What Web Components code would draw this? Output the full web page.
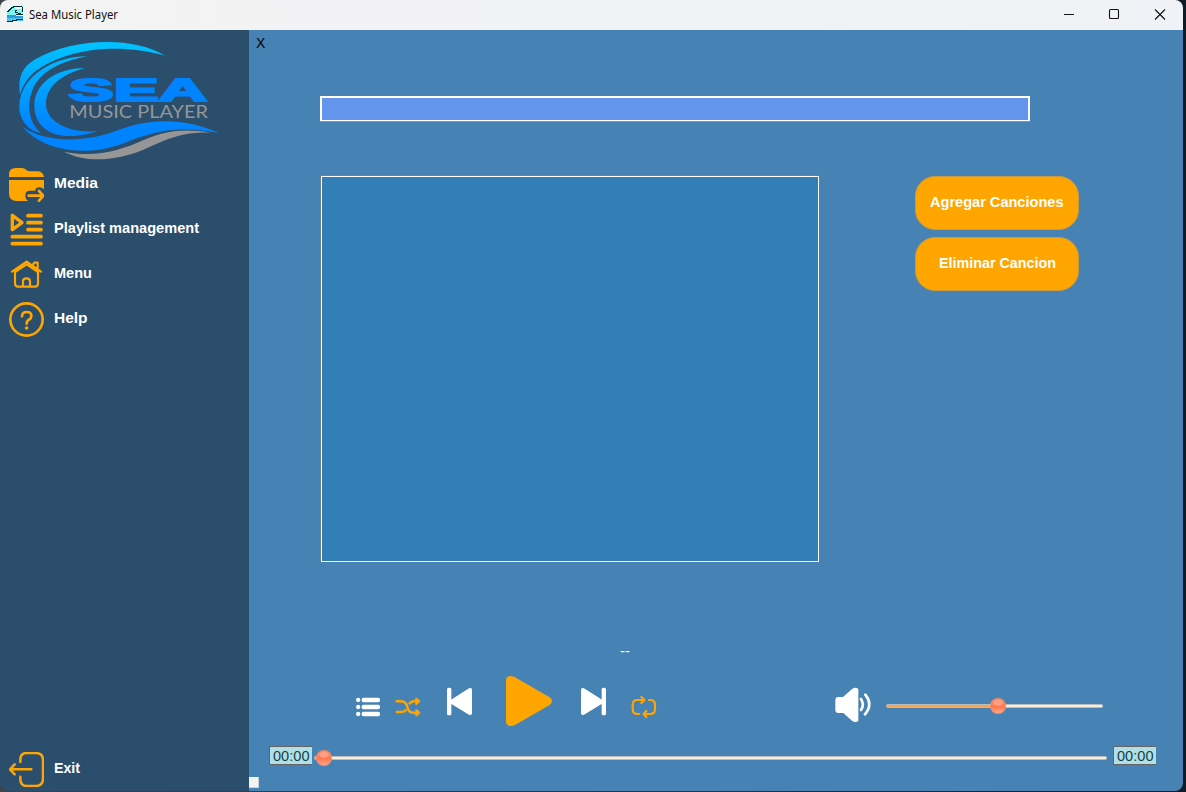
<!DOCTYPE html>
<html lang="es"><head><meta charset="utf-8"><title>Sea Music Player</title>
<style>html,body{margin:0;width:1186px;height:792px;overflow:hidden;background:linear-gradient(90deg,#3f4247,#2c333a 60%,#101a24);font-family:"Liberation Sans",Arial,sans-serif}</style>
</head><body>
<sea-window></sea-window>
<script>
const define=(name,html,init)=>customElements.define(name,class extends HTMLElement{
  constructor(){super();this.attachShadow({mode:'open'})}
  connectedCallback(){
    if(this.shadowRoot.firstChild)return;
    const t=document.createElement('template');
    t.innerHTML=typeof html==='function'?html(this):html;
    this.shadowRoot.append(t.content.cloneNode(true));
    if(init)init(this);
  }
});

// Single line of text stretched to a given width.
define('fit-label',`<style>:host{display:block;white-space:pre;flex:none;text-align:left}span{display:inline-block;transform-origin:0 50%}</style><span><slot></slot></span>`,el=>{
  const s=el.shadowRoot.querySelector('span'),w=+el.getAttribute('w');
  const n=s.getBoundingClientRect().width;
  el.style.width=w+'px';
  if(n)s.style.transform=`scaleX(${w/n})`;
});

const stroke=(d,w,c='#ffa500')=>`<path d="${d}" fill="none" stroke="${c}" stroke-width="${w}" stroke-linecap="round" stroke-linejoin="round"/>`;
const icons={
  media:['27 21 105 105',`<path fill="#ffa500" d="M27 51V43Q27 24 48 24H66Q73 24 79 30Q84 34 91 34H112Q129 34 132 51ZM27 60H132V88Q126 82 118 82Q108 82 105 92H89Q76 92 76 106Q76 118 84 123H50Q27 123 27 100Z"/>`+stroke('M86 107H128M117 93L130 107L117 122',8)],
  playlist:['27 156 105 105',stroke('M37 166V209L66 188Z',10)+stroke('M84 167H123M84 188H123M84 209H123M37 230H123M37 251H123',11)],
  home:['27 291 105 105',stroke('M36 335L80 305L123 335M98 315L103 308H113V326M45 336V370Q45 380 54 380H105Q114 380 114 370V336L80 313L45 336M69 380V364Q69 355 79 355Q90 355 90 364V380',6.5)],
  help:['27 426 105 105',`<circle cx="79.5" cy="478.5" r="48.5" fill="none" stroke="#ffa500" stroke-width="8"/>`+stroke('M66 469Q66 456 80 456Q94 456 94 467Q94 475 87 479Q80 483 80 491',8)+`<circle cx="80" cy="504" r="5.5" fill="#ffa500"/>`],
  exit:['27 36 105 105',stroke('M61 66V60Q61 39 80 39H106Q129 39 129 60V116Q129 138 106 138H80Q61 138 61 116V110M94 88H30M44 73L30 88L44 103',7.5)],
  list:['48 105 75 156',[180,201,222].map(y=>`<circle cx="54.5" cy="${y}" r="6.5" fill="#fff"/><rect x="65" y="${y-6.5}" width="55" height="13" rx="5" fill="#fff"/>`).join('')],
  shuffle:['165 105 78 156',stroke('M170 184H180Q197 184 201 197L204 207Q208 218 220 218H235M170 216H184Q193 216 197 211M209 190Q214 184 222 184H235M229 177L237 184L229 191M229 211L237 218L229 225',7.5)],
  prev:['318 105 81 156',`<rect x="321" y="143" width="13" height="83" rx="5" fill="#fff"/><path fill="#fff" d="M333 179L387 145Q396 141 396 150V219Q396 228 387 224L333 191Z"/>`],
  play:['495 105 144 156',`<path fill="#ffa500" d="M498 122Q498 108 512 108Q518 108 525 112L629 172Q643 183 629 195L525 255Q519 258 512 258Q498 258 498 244Z"/>`],
  next:['720 105 81 156',`<rect x="785" y="143" width="13" height="83" rx="5" fill="#fff"/><path fill="#fff" d="M786 179L732 145Q723 141 723 150V219Q723 228 732 224L786 191Z"/>`],
  repeat:['873 105 78 156',stroke('M898 222H892Q878 222 878 208V194Q878 180 892 180H912M904 171L913 180L904 189M927 180H931Q945 180 945 194V208Q945 222 931 222H912M919 213L911 222L919 231',6.5)],
  volume:['42 15 114 156',`<path fill="#fff" d="M46 90Q46 81 55 81H69L97 56Q107 50 115 57V153Q107 159 97 153L70 129H55Q46 129 46 120Z"/>`+stroke('M123 87Q134 104 123 120M136 74Q160 103 135 133',8,'#fff')]
};
define('sea-icon',el=>{const[v,b]=icons[el.getAttribute('name')],[,,w,h]=v.split(' ');
  return `<style>:host{display:block;flex:none}svg{display:block}</style><svg width="${w/3}" height="${h/3}" viewBox="${v}">${b}</svg>`});

define('sea-logo',`<style>:host{display:block;height:135px}svg{display:block}</style>
<svg width="249" height="135" viewBox="0 90 747 405">
<defs><linearGradient id="g" gradientUnits="userSpaceOnUse" x1="0" y1="130" x2="0" y2="450"><stop offset="0" stop-color="#00c3ff"/><stop offset=".8" stop-color="#0083ff"/><stop offset="1" stop-color="#0083ff"/></linearGradient></defs>
<g fill="url(#g)">
<path d="M60 285C52 232 67 201 106 178C220 112 404 109 495 167C397 140 286 138 190 171C111 199 74 234 60 285Z"/>
<path d="M262 169C170 169 61 222 58 319C57 354 79 391 123 400C87 367 79 321 96 274C116 221 166 188 262 169Z"/>
<path d="M255 204C165 204 103 254 103 315C103 380 151 408 208 408C242 408 273 401 292 393C218 400 157 374 142 333C127 286 156 230 255 204Z"/>
<path d="M68 382C147 433 263 424 345 394C447 354 547 352 658 399C539 378 471 391 383 425C285 466 146 467 68 382Z"/></g>
<path fill="#969696" d="M192 455C280 475 364 451 431 420C504 388 559 386 636 398C560 394 511 412 448 441C355 485 258 490 192 455Z"/>
<text x="206" y="304" textLength="416" lengthAdjust="spacingAndGlyphs" font-family="Liberation Sans,sans-serif" font-weight="700" font-size="96" fill="#0083ff" stroke="#0083ff" stroke-width="6">SEA</text>
<text x="208" y="354" textLength="416" lengthAdjust="spacingAndGlyphs" font-family="Lato,sans-serif" font-weight="400" font-size="53" fill="#969696">MUSIC PLAYER</text>
</svg>`);

define('nav-item',el=>`<style>:host{display:flex;height:35px;gap:10px;padding-left:9px;color:#fff;font:bold 14px/33px "Liberation Sans",Arial,sans-serif}</style>
<sea-icon name="${el.getAttribute('icon')}"></sea-icon><fit-label w="${el.getAttribute('w')}">${el.getAttribute('text')}</fit-label>`);

define('sea-sidebar',`<style>:host{display:flex;flex-direction:column;box-sizing:border-box;background:#2a4e6c;padding-bottom:4px}nav{display:flex;flex-direction:column;gap:10px;padding-top:2px}.exit{margin-top:auto}</style>
<sea-logo></sea-logo><nav><nav-item icon="media" text="Media" w="44"></nav-item><nav-item icon="playlist" text="Playlist management" w="145"></nav-item><nav-item icon="home" text="Menu" w="38"></nav-item><nav-item icon="help" text="Help" w="33.5"></nav-item></nav>
<nav-item class="exit" icon="exit" text="Exit" w="26"></nav-item>`);

define('title-bar',`<style>:host{display:flex;height:30px;background:linear-gradient(90deg,#f3f3f3,#f0f2f7);align-items:center;box-sizing:border-box;padding-left:7px;color:#111;font:12px/28px "Noto Sans",sans-serif}.app{margin:-2px 6px 0 0}.b{margin-left:auto;display:block}svg{display:block}</style>
<svg class="app" width="16" height="16" viewBox="0 0 16 16" shape-rendering="crispEdges"><path fill="#7cf4f4" d="M5 0H16V7H14V9H0V5Z"/><path fill="#e4ffff" d="M8 1H15V3H8Z"/><path fill="#3499db" d="M0 9H9V10H16V13H0Z"/><path fill="#42ccf5" d="M0 12H16V15H0Z"/><path fill="none" stroke="#06272d" d="M0 5.5H1.5V4.5H2.5V3.5H3.5V2.5H4.5V1.5H6V.5H15M8 4.5H10M8.5 4V6.5H11M11 7.5H14M15.5 1V6M9 8.5H16M0 15.5H5V14.5H9V13.5H16"/></svg>
<fit-label w="89">Sea Music Player</fit-label>
<svg class="b" width="119" height="30" viewBox="1064 0 119 30" fill="none" stroke="#111" stroke-width="1.1"><path d="M1064 14.5H1074"/><rect x="1109.5" y="9.5" width="9" height="9" rx="1"/><path d="M1155 9.5L1165 19.5M1165 9.5L1155 19.5"/></svg>`);

define('sea-button',el=>`<style>:host{display:block}button{display:flex;justify-content:center;width:164px;height:54px;border:1px solid #c89a43;border-radius:20px;background:#ffa500;color:#fff;padding:0;font:bold 14px/51px "Liberation Sans",Arial,sans-serif}</style><button><fit-label w="${el.getAttribute('w')}">${el.getAttribute('text')}</fit-label></button>`);

define('sea-slider',el=>{const p=+el.getAttribute('at'),c=+el.getAttribute('cy');return `<style>:host{display:block;position:relative;flex:none}
.t{height:4px;box-sizing:border-box;border-radius:2px;background:linear-gradient(90deg,#ffa548 ${p}px,#faebd7 ${p}px);border-top:1px solid #b5bdc1;border-bottom:1px solid #b5bdc1}
.k{position:absolute;left:${p-8}px;top:${c}px;width:16px;height:16px;border-radius:50%;background:radial-gradient(ellipse 5px 3px at 50% 30%,#ff9e80 0 90%,transparent),linear-gradient(#ff8a67,#ff7951 55%,#ffae93);box-shadow:inset 0 0 0 1px #f58b6d}</style><div class="t"></div><div class="k"></div>`});

define('time-box',`<style>:host{display:block;box-sizing:border-box;width:43px;height:19px;padding-left:3px;border:1px solid #646464;border-right:0;background:#b0e0e6;color:#173f48;font:14px/18px "Liberation Sans",Arial,sans-serif}</style><fit-label w="36.5"><slot></slot></fit-label>`);

define('sea-player',`<style>
:host{display:flex;flex-direction:column;background:#4682b4;font-family:"Liberation Sans",Arial,sans-serif}
.x{height:26px;line-height:26px;padding-left:7px;font-size:14px;color:#000}
.field{box-sizing:border-box;height:25px;margin:40px 153px 0 71px;background:#6495ed;border:2px solid #fff;border-bottom-width:1px;box-shadow:0 1px #8f8f88}
.mid{display:flex;margin:55px 0 0 72px;gap:96px;height:386px}
.songs{box-sizing:border-box;width:498px;border:1px solid #fff;background:#327eb7;box-shadow:-1px -1px #747f86}
.buttons{display:flex;flex-direction:column;gap:7px}
.now{height:20px;margin:79px 0 0 371px;line-height:20px;font-size:14px;color:#fff}
.ctl{display:flex;height:52px;margin-top:14px;padding-left:107px}
.vol{width:217px;margin:29px 0 0 14px}
.time{display:flex;margin:19px 0 0 20px;height:19px}
.seek{width:793px;margin:10px 6px 0 2px}
.grip{width:10px;height:11px;margin-top:12px;background:#f3f3f3;box-shadow:inset -1px -1px #cfcfcf}
</style>
<div class="x">X</div><div class="field"></div>
<div class="mid"><div class="songs"></div><div class="buttons"><sea-button text="Agregar Canciones" w="133.5"></sea-button><sea-button text="Eliminar Cancion" w="117"></sea-button></div></div>
<div class="now"><fit-label w="10">--</fit-label></div>
<div class="ctl"><sea-icon name="list"></sea-icon><sea-icon name="shuffle" style="margin-left:14px"></sea-icon><sea-icon name="prev" style="margin-left:25px"></sea-icon><sea-icon name="play" style="margin-left:32px"></sea-icon><sea-icon name="next" style="margin-left:27px"></sea-icon><sea-icon name="repeat" style="margin-left:24px"></sea-icon><sea-icon name="volume" style="margin-left:177px"></sea-icon><sea-slider class="vol" at="111.5" cy="-6.5"></sea-slider></div>
<div class="time"><time-box>00:00</time-box><sea-slider class="seek" at="9.5" cy="-6.5"></sea-slider><time-box>00:00</time-box></div>
<div class="grip"></div>`);

define('sea-window',`<style>:host{display:grid;grid-template:30px 761px / 249px 934px;width:1183px;height:791px;border-radius:8px;overflow:hidden}title-bar{grid-column:1/-1}</style><title-bar></title-bar><sea-sidebar></sea-sidebar><sea-player></sea-player>`);
</script></body></html>
